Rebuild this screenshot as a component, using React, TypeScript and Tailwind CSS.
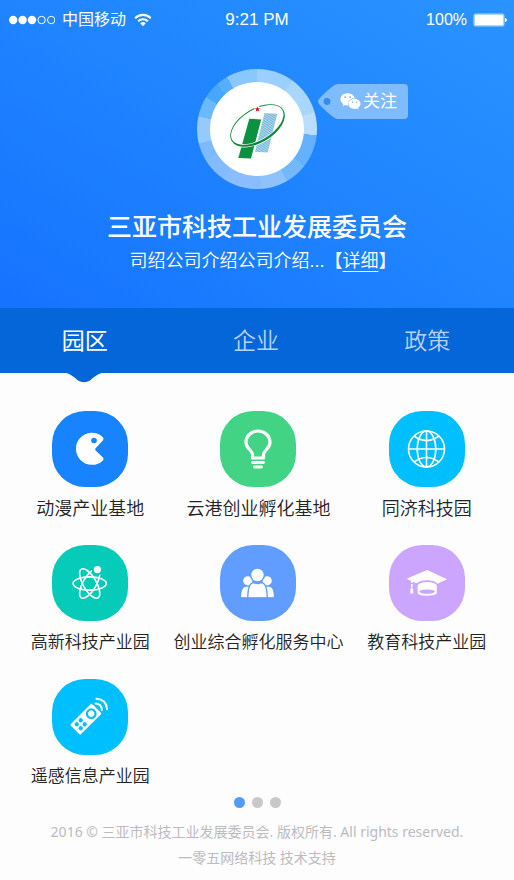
import React, { useState } from 'react';
import { FaWeixin } from 'react-icons/fa';

const PacmanIcon = () => (
  <svg viewBox="0 0 76 76" className="h-full w-full" aria-hidden="true">
    <path
      d="M43.6 37.2 L51 29.2 Q52.3 27.4 50.6 25.9 A16 16 0 1 0 51 49.4 Q52.2 48 51 46.5 L43.6 39.4 Q42.6 38.3 43.6 37.2 Z"
      fill="#fff"
    />
    <circle cx="42" cy="29.5" r="2.8" fill="#1783ff" />
  </svg>
);

const BulbIcon = () => (
  <svg viewBox="0 0 76 76" className="h-full w-full" fill="none" stroke="#fff" aria-hidden="true">
    <path
      d="M32.5 47 V43.5 C32.5 39.5 26 37.5 26 31.5 C26 24.8 31.4 20 38 20 C44.6 20 50 24.8 50 31.5 C50 37.5 43.5 39.5 43.5 43.5 V47 Z"
      strokeWidth="3.2"
      strokeLinejoin="round"
    />
    <path d="M32.5 51.5 H43.5" strokeWidth="2.8" strokeLinecap="round" />
    <path d="M34.5 56 H41.5" strokeWidth="2.8" strokeLinecap="round" />
  </svg>
);

const GlobeIcon = () => (
  <svg viewBox="0 0 76 76" className="h-full w-full" fill="none" stroke="#fff" strokeWidth="1.6" aria-hidden="true">
    <circle cx="37.5" cy="38" r="18" />
    <ellipse cx="37.5" cy="38" rx="9.3" ry="18" />
    <path d="M37.5 20 V56 M19.5 38 H55.5" />
    <path d="M25 25 Q37.5 34 50 25 M25 51 Q37.5 42 50 51" />
  </svg>
);

const AtomIcon = () => (
  <svg viewBox="0 0 76 76" className="h-full w-full" fill="none" stroke="#fff" strokeWidth="1.6" aria-hidden="true">
    <ellipse cx="37.7" cy="38.5" rx="16.6" ry="6.6" />
    <ellipse cx="37.7" cy="38.5" rx="16.6" ry="6.6" transform="rotate(60 37.7 38.5)" />
    <ellipse cx="37.7" cy="38.5" rx="16.6" ry="6.6" transform="rotate(120 37.7 38.5)" />
    <circle cx="45.4" cy="24.6" r="4.6" fill="#fff" stroke="#05cbb8" strokeWidth="2" />
  </svg>
);

const PeopleIcon = () => (
  <svg viewBox="0 0 76 76" className="h-full w-full" fill="#fff" aria-hidden="true">
    <circle cx="27.8" cy="35.8" r="4.6" />
    <circle cx="47.2" cy="35.8" r="4.6" />
    <path d="M21.2 52.3 C21.2 46 22.4 41.8 26.2 41.8 H48.8 C52.6 41.8 53.8 46 53.8 52.3 Z" />
    <g stroke="#609dff" strokeWidth="1.4">
      <circle cx="37.5" cy="30" r="6.9" />
      <path d="M27.8 53 C27.8 44 29.5 37.6 34 37.6 Q37.5 39.4 41 37.6 C45.5 37.6 47.2 44 47.2 53 Z" />
    </g>
    <path d="M20 52.4 H56 V55 H20 Z" fill="#609dff" />
  </svg>
);

const CapIcon = () => (
  <svg viewBox="0 0 76 76" className="h-full w-full" fill="#fff" aria-hidden="true">
    <path d="M17.5 33.8 L38.3 25 L58 34.2 L48.3 38.8 C45.5 34.2 31.5 34.2 28 38.2 L23.5 36.8 V38 H22 V36 Z" />
    <path d="M28.6 40.4 C31.5 36 44.8 36 47.8 40.4 V48.4 C44.8 51.4 31.5 51.4 28.6 48.4 Z" />
    <ellipse cx="38.1" cy="46.6" rx="7.8" ry="2.2" fill="#cba5ff" />
    <path d="M22 39 H23.6 V42.4 H22 Z M21.6 43.2 H24 L24.3 48.4 H21.2 Z" />
  </svg>
);

const RemoteIcon = () => (
  <svg viewBox="0 0 76 76" className="h-full w-full" aria-hidden="true">
    <g transform="translate(34 40) rotate(45)">
      <rect x="-7.2" y="-15" width="14.4" height="30.5" rx="1" fill="#fff" />
      <circle cx="0" cy="-7.4" r="4.3" fill="#fff" stroke="#00bfff" strokeWidth="2.2" />
      <g fill="#00bfff">
        <circle cx="-2.8" cy="4.6" r="2.1" />
        <circle cx="2.8" cy="4.6" r="2.1" />
        <circle cx="-2.8" cy="10.2" r="2.1" />
        <circle cx="2.8" cy="10.2" r="2.1" />
      </g>
      <g fill="none" stroke="#fff" strokeWidth="2" strokeLinecap="round">
        <path d="M-4.3 -17.6 Q0.3 -21.8 4.9 -17.6" />
        <path d="M-7 -21.8 Q0.5 -28.4 8 -21.8" />
      </g>
    </g>
  </svg>
);

const LogoMark = () => (
  <svg viewBox="0 0 94 94" className="h-[94px] w-[94px]" aria-hidden="true">
    <defs>
      <pattern id="hatch" width="2" height="2" patternUnits="userSpaceOnUse" patternTransform="rotate(35)">
        <rect width="2" height="2" fill="#acd7eb" />
        <rect width="2" height="1" fill="#78b9d8" />
      </pattern>
    </defs>
    <path d="M39.3 36.7 L51.2 37.4 L41 76.6 L28.3 76 Z" fill="#0c9140" />
    <path d="M54.5 31 L67.3 31.8 L57.7 70.4 L45 69.7 Z" fill="url(#hatch)" />
    <g transform="rotate(-31 47.5 43.5)" fillRule="evenodd">
      <path
        d="M17.3 43.5 A30.2 17 0 1 0 77.7 43.5 A30.2 17 0 1 0 17.3 43.5 Z M18.4 42.9 A29.2 15.3 0 1 1 76.8 42.9 A29.2 15.3 0 1 1 18.4 42.9 Z"
        fill="#fff"
        stroke="#fff"
        strokeWidth="1.4"
      />
      <path
        d="M17.3 43.5 A30.2 17 0 1 0 77.7 43.5 A30.2 17 0 1 0 17.3 43.5 Z M18.4 42.9 A29.2 15.3 0 1 1 76.8 42.9 A29.2 15.3 0 1 1 18.4 42.9 Z"
        fill="#0c8a3a"
      />
    </g>
    <circle cx="47.4" cy="27" r="3" fill="#fff" />
    <path d="M47.4 24.4 L48.1 26.3 L50 26.4 L48.5 27.6 L49.1 29.5 L47.4 28.4 L45.7 29.5 L46.3 27.6 L44.8 26.4 L46.7 26.3 Z" fill="#e60012" />
  </svg>
);

const tabs = ['园区', '企业', '政策'];

const parks = [
  { name: '动漫产业基地', color: 'bg-[#1783ff]', size: 'text-[18px]', Icon: PacmanIcon },
  { name: '云港创业孵化基地', color: 'bg-[#42d484]', size: 'text-[18px]', Icon: BulbIcon },
  { name: '同济科技园', color: 'bg-[#00bfff]', size: 'text-[18px]', Icon: GlobeIcon },
  { name: '高新科技产业园', color: 'bg-[#05cbb8]', size: 'text-[17px]', Icon: AtomIcon },
  { name: '创业综合孵化服务中心', color: 'bg-[#609dff]', size: 'text-[17px]', Icon: PeopleIcon },
  { name: '教育科技产业园', color: 'bg-[#cba5ff]', size: 'text-[17px]', Icon: CapIcon },
  { name: '遥感信息产业园', color: 'bg-[#00bfff]', size: 'text-[17px]', Icon: RemoteIcon },
];

const StatusBar = () => (
  <div className="grid h-10 grid-cols-3 items-center px-[7px] text-[16px] leading-5">
    <div className="flex items-center">
      <svg viewBox="0 0 48 10" className="h-[10px] w-[48px]" fill="#fff" aria-hidden="true">
        <circle cx="6.2" cy="5" r="4.2" />
        <circle cx="15.6" cy="5" r="4.2" />
        <circle cx="25" cy="5" r="4.2" />
        <circle cx="34.6" cy="5" r="3.7" fill="none" stroke="#fff" />
        <circle cx="44.2" cy="5" r="3.7" fill="none" stroke="#fff" />
      </svg>
      <span className="ml-[7px] whitespace-nowrap">中国移动</span>
      <svg viewBox="0 0 18 14" className="ml-2 h-[14px] w-[18px]" fill="none" stroke="#fff" strokeWidth="2.1" aria-hidden="true">
        <path d="M1.2 5.2 C5.4 0.8 12.6 0.8 16.8 5.2" />
        <path d="M4.2 8.3 C6.8 5.6 11.2 5.6 13.8 8.3" />
        <path d="M6.2 10.3 Q9 7.9 11.8 10.3 L9 13.2 Z" fill="#fff" stroke="none" />
      </svg>
    </div>
    <div className="text-center text-[17px]">9:21 PM</div>
    <div className="flex items-center justify-end gap-1.5">
      <span>100%</span>
      <svg viewBox="0 0 34 14" className="h-[14px] w-[34px]" aria-hidden="true">
        <rect x="0.5" y="0.5" width="31" height="13" rx="2.5" fill="#a9d7ef" />
        <rect x="2" y="2" width="28" height="10" rx="1" fill="#fff" />
        <path d="M32 5 Q34 5.4 34 7 Q34 8.6 32 9 Z" fill="#fff" />
      </svg>
    </div>
  </div>
);

const App = () => {
  const [activeTab, setActiveTab] = useState(0);
  const [page, setPage] = useState(0);

  return (
    <div className="min-h-screen bg-[#fdfdfd] font-['Liberation_Sans','Noto_Sans_CJK_SC',sans-serif]">
      {/* Header */}
      <header className="bg-linear-to-tr from-[#1672ff] via-[#1f84ff] to-[#2a93ff] pb-[34px] text-white">
        <StatusBar />

        <div className="mt-[29px] grid grid-cols-[1fr_auto_1fr]">
          <div className="col-start-2 flex h-[120px] w-[120px] items-center justify-center rounded-full bg-[conic-gradient(#99d0ff_0_36deg,#a9d6ff_36deg_74deg,#b9deff_74deg_96deg,#62b2ff_96deg_128deg,#74b8fc_128deg_150deg,#8dc2fb_150deg_176deg,#8abdff_176deg_214deg,#84bbff_214deg_238deg,#7cb9ff_238deg_256deg,#94caff_256deg_282deg,#6ab9ff_282deg_302deg,#47a7fc_302deg_318deg,#56aeff_318deg_330deg,#88c8ff_330deg_360deg)]">
            <div className="rounded-full bg-white">
              <LogoMark />
            </div>
          </div>
          <button type="button" className="relative mt-[15px] ml-px flex h-[35px] w-[90px] items-center gap-0.5 pl-[22px] text-[17px]">
            <svg viewBox="0 0 90 35" className="absolute inset-0 h-full w-full" aria-hidden="true">
              <path
                d="M17 0.8 Q18.4 0 20 0 H86 Q90 0 90 4 V31 Q90 35 86 35 H20 Q18.4 35 17 34.2 Q9 29 1 20 Q-1 17.5 1 15 Q9 6 17 0.8 Z"
                fill="#7fbbff"
              />
              <circle cx="9" cy="17.5" r="3.4" fill="#338ce9" />
            </svg>
            <FaWeixin className="relative h-[21px] w-[21px]" />
            <span className="relative whitespace-nowrap">关注</span>
          </button>
        </div>

        <h1 className="mt-[22px] text-center text-[25px] leading-8 font-medium">三亚市科技工业发展委员会</h1>
        <p className="mt-[5px] pl-3 text-center text-[18px] leading-[26px] font-[350]">
          司绍公司介绍公司介绍...【<a href="#detail" className="underline underline-offset-4">详细</a>】
        </p>
      </header>

      {/* Tabs */}
      <nav className="grid grid-cols-3 bg-[#0566d9]">
        {tabs.map((tab, i) => (
          <button
            key={tab}
            type="button"
            onClick={() => setActiveTab(i)}
            className={`relative h-[65px] pt-0.5 pr-0.5 text-[23px] ${i === activeTab ? 'text-white' : 'font-[350] text-[#b4d3f8]'}`}
          >
            {tab}
            {i === activeTab && (
              <svg viewBox="0 0 36 10" className="absolute top-full left-1/2 h-[10px] w-[36px] -translate-x-5" aria-hidden="true">
                <path d="M0 0 H36 C31 1 27 5 24 7.4 Q18 11 12 7.4 C9 5 5 1 0 0 Z" fill="#0566d9" />
              </svg>
            )}
          </button>
        ))}
      </nav>

      {/* Parks */}
      <main className="grid grid-cols-3 gap-y-[23px] pt-[38px] pr-[3px] pl-1.5">
        {parks.map(({ name, color, size, Icon }) => (
          <a key={name} href="#park" className="flex flex-col items-center gap-[9px]">
            <span className={`h-[76px] w-[76px] rounded-[33px] ${color}`}>
              <Icon />
            </span>
            <span className={`leading-[26px] font-[350] whitespace-nowrap text-[#222] ${size}`}>{name}</span>
          </a>
        ))}
      </main>

      <div className="mt-[7px] flex justify-center gap-[7px]">
        {[0, 1, 2].map((i) => (
          <button
            key={i}
            type="button"
            aria-label={`第${i + 1}页`}
            onClick={() => setPage(i)}
            className={`h-[11px] w-[11px] rounded-full ${i === page ? 'bg-[#529bfa]' : 'bg-[#c8c8c8]'}`}
          />
        ))}
      </div>

      <footer className="mt-[11px] text-center font-['Noto_Sans','Noto_Sans_CJK_SC',sans-serif] text-[14px] leading-[26px] text-[#bbbbbf]">
        <p>2016 © 三亚市科技工业发展委员会. 版权所有. All rights reserved.</p>
        <p>一零五网络科技 技术支持</p>
      </footer>
    </div>
  );
};

export default App;
